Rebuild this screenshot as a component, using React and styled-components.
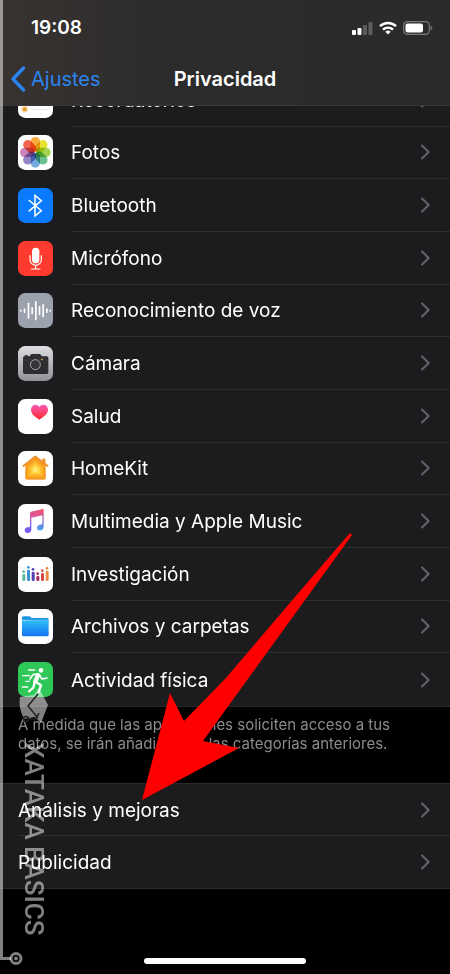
import React from "react";
import styled, { createGlobalStyle } from "styled-components";

const GlobalStyle = createGlobalStyle`
  *, *::before, *::after { box-sizing: border-box; }
  body {
    margin: 0;
    background: #000;
    color: #fff;
    font-family: Inter, "Liberation Sans", sans-serif;
  }
`;

const Screen = styled.div`
  position: relative;
  display: flex;
  flex-direction: column;
  min-height: 100vh;
  overflow: hidden;
  background: #000;
`;

const Header = styled.header`
  z-index: 1;
  display: flex;
  flex-direction: column;
  background: linear-gradient(90deg, #383331 0%, #2d2c2c 34%, #2a2a2a 100%);
  border-bottom: 1px solid #38383a;
`;

const StatusBar = styled.div`
  display: flex;
  align-items: center;
  justify-content: space-between;
  height: 56px;
  padding: 0 17px 0 31px;
`;

const Clock = styled.time`
  font-size: 19px;
  font-weight: 600;
  line-height: 24px;
`;

const StatusIcons = styled.div`
  display: flex;
  align-items: center;
  gap: 6px;
`;

const NavBar = styled.nav`
  display: grid;
  grid-template-columns: 1fr auto 1fr;
  align-items: center;
  height: 49px;
  padding: 0 10px 4px;
`;

const BackLink = styled.a`
  display: flex;
  align-items: center;
  gap: 6px;
  color: #2a84f0;
  font-size: 20px;
  line-height: 24px;
  text-decoration: none;
`;

const Title = styled.h1`
  margin: 0;
  font-size: 20px;
  font-weight: 600;
  line-height: 24px;
`;

const List = styled.ul`
  display: grid;
  grid-auto-rows: 1fr;
  min-height: ${(p) => (p.$scrolled ? "634px" : "106px")};
  margin: ${(p) => (p.$scrolled ? "-33px 0 0" : "30px 0 0")};
  padding: 0;
  list-style: none;
  background: #1c1c1e;
  border-top: 1px solid #2a2a2c;
  border-bottom: 1px solid #2a2a2c;
`;

const Row = styled.li`
  display: flex;
  padding-left: 18px;
`;

const RowLink = styled.a`
  flex: 1;
  display: flex;
  align-items: center;
  gap: 18px;
  color: #fff;
  text-decoration: none;
`;

const RowBody = styled.span`
  flex: 1;
  align-self: stretch;
  display: flex;
  align-items: center;
  justify-content: space-between;
  padding-right: 19px;
  border-bottom: ${(p) => (p.$last ? "0" : "1px solid #2e2e30")};
`;

const Label = styled.span`
  padding-top: 2px;
  font-size: 19px;
  line-height: 26px;
`;

const Note = styled.p`
  margin: 0;
  padding: 8px 18px 0;
  color: #8b8b90;
  font-size: 15px;
  line-height: 19px;
`;

const HomeArea = styled.footer`
  display: flex;
  justify-content: center;
  margin-top: auto;
  padding: 0 0 10px;
`;

const HomeIndicator = styled.div`
  width: 36%;
  height: 6px;
  border-radius: 3px;
  background: #fff;
`;

const Tile = styled.svg`
  flex: none;
  width: 35px;
  height: 35px;
`;

const PetalGroup = styled.g`
  isolation: isolate;
`;

const Petal = styled.rect`
  mix-blend-mode: multiply;
`;

const Overlay = styled.svg`
  position: absolute;
  z-index: 2;
  top: 0;
  left: 0;
  pointer-events: none;
`;

const Watermark = styled.div`
  position: absolute;
  z-index: 2;
  left: 18px;
  bottom: 38px;
  writing-mode: vertical-rl;
  color: rgba(255, 255, 255, 0.5);
  font-family: Roboto, sans-serif;
  font-size: 26px;
  font-weight: 500;
  line-height: 32px;
  white-space: nowrap;
  pointer-events: none;
`;

function Chevron() {
  return (
    <svg width="12" height="16" viewBox="0 0 12 16" fill="none" aria-hidden="true">
      <path d="M3 1.5 9.7 8 3 14.5" stroke="#646468" strokeWidth="2" strokeLinecap="round" strokeLinejoin="round" />
    </svg>
  );
}

function AppTile({ fill = "#fff", children }) {
  return (
    <Tile viewBox="0 0 105 105" aria-hidden="true">
      <rect width="105" height="105" rx="22" fill={fill} />
      {children}
    </Tile>
  );
}

function RemindersIcon() {
  return (
    <AppTile>
      <circle cx="20" cy="26" r="8" fill="#3b82f6" />
      <circle cx="20" cy="52" r="8" fill="#ef4444" />
      <circle cx="20" cy="79" r="10" fill="#fbdcae" />
      <circle cx="20" cy="79" r="6" fill="#f09a28" />
      <path d="M38 26h54M38 52h54M38 79h54" stroke="#d8d8dc" strokeWidth="2" />
    </AppTile>
  );
}

const petals = ["#fba32c", "#e6df1e", "#9fd041", "#5dbb84", "#6ba5dc", "#8c7dc2", "#c97bb5", "#f2573f"];

function PhotosIcon() {
  return (
    <AppTile>
      <PetalGroup>
        {petals.map((color, i) => (
          <Petal
            key={color}
            x="38"
            y="6"
            width="28"
            height="44"
            rx="14"
            fill={color}
            fillOpacity="0.92"
            transform={`rotate(${i * 45} 52 52)`}
          />
        ))}
      </PetalGroup>
    </AppTile>
  );
}

function BluetoothIcon() {
  return (
    <AppTile fill="#0a7aff">
      <path d="M32 36 70 68 51 84V22L70 38 32 70" fill="none" stroke="#fff" strokeWidth="4.5" />
    </AppTile>
  );
}

function MicIcon() {
  return (
    <AppTile fill="#ff3b30">
      <rect x="42" y="20" width="22" height="47" rx="11" fill="#fff" />
      <path d="M36 44v12a17 17 0 0 0 34 0V44M53 73v11M40 84h26" fill="none" stroke="#fff" strokeWidth="3.5" strokeLinecap="round" />
    </AppTile>
  );
}

const wave = [[8, 6], [19, 14], [31, 48], [42, 22], [53, 58], [64, 28], [75, 40], [86, 14], [96, 6]];

function VoiceIcon() {
  return (
    <AppTile fill="#9ca2ad">
      {wave.map(([x, h]) => (
        <rect key={x} x={x - 2} y={53 - h / 2} width="5" height={h} rx="2" fill="#fff" />
      ))}
    </AppTile>
  );
}

function CameraIcon() {
  return (
    <AppTile fill="url(#cameraTile)">
      <defs>
        <linearGradient id="cameraTile" x2="0" y2="1">
          <stop stopColor="#dedee1" />
          <stop offset="1" stopColor="#919196" />
        </linearGradient>
      </defs>
      <path d="M20 31v-3h10v3h5l5-7h26l6 7h14q5 0 5 5v43q0 5-5 5H20q-5 0-5-5V36q0-5 5-5Z" fill="#2e2e30" />
      <path d="M15 42h76" stroke="#47474a" strokeWidth="2" />
      <circle cx="52" cy="56" r="18" fill="#2e2e30" />
      <circle cx="52" cy="56" r="15" fill="#353537" stroke="#a9a9ad" strokeWidth="3" />
      <circle cx="72" cy="40" r="2.5" fill="#f5c542" />
    </AppTile>
  );
}

function HealthIcon() {
  return (
    <AppTile>
      <defs>
        <linearGradient id="heart" x2="0" y2="1">
          <stop stopColor="#fb5bb4" />
          <stop offset="1" stopColor="#fb2a2c" />
        </linearGradient>
      </defs>
      <path d="M64 62C50 53 39 44 39 32c0-9 6-15 13-15 5 0 9 2 12 7 3-5 8-7 13-7 7 0 13 6 13 15 0 12-12 21-26 30Z" fill="url(#heart)" />
    </AppTile>
  );
}

function HomeKitIcon() {
  return (
    <AppTile>
      <g strokeLinejoin="round">
        <path d="M74 36V24h7v16" fill="#f19a24" stroke="#e98a1c" strokeWidth="2" />
        <path d="M52 18 82 43v39q0 3-3 3H26q-3 0-3-3V43Z" fill="#f89d1e" stroke="#ee8c1b" strokeWidth="2" />
        <path d="M16 45 52 16l37 29" fill="none" stroke="#ee8f28" strokeWidth="5" strokeLinecap="round" />
        <path d="M52 30 74 48v27H31V48Z" fill="#fdb72a" stroke="#fdb72a" strokeWidth="3" />
        <path d="M52 40 65 51v16H40V51Z" fill="#ffd84a" stroke="#ffd03c" strokeWidth="4" />
        <path d="M52 48 58 54v8H46v-8Z" fill="#ffe87c" />
      </g>
    </AppTile>
  );
}

function MusicIcon() {
  return (
    <AppTile>
      <defs>
        <linearGradient id="note" gradientUnits="userSpaceOnUse" x1="60" y1="14" x2="45" y2="86">
          <stop stopColor="#f4536f" />
          <stop offset="0.35" stopColor="#d7569f" />
          <stop offset="0.7" stopColor="#7f62e6" />
          <stop offset="1" stopColor="#7658f0" />
        </linearGradient>
        <linearGradient id="noteRight" gradientUnits="userSpaceOnUse" x1="74" y1="20" x2="68" y2="78">
          <stop stopColor="#ee5577" />
          <stop offset="0.6" stopColor="#7d78dc" />
          <stop offset="1" stopColor="#3fa3ee" />
        </linearGradient>
      </defs>
      <path d="M36 27q0-3 3-4l35-8q3-1 3 2v16l-37 8v36c0 6-5 10-11 10s-9-3-9-8 4-8 9-9c5-1 7-1 7-5Z" fill="url(#note)" />
      <path d="M73 30h4v38c0 7-5 11-11 11s-9-3-9-8 4-8 9-9c5-1 7-1 7-5Z" fill="url(#noteRight)" />
    </AppTile>
  );
}

const people = [
  [17, 44, "#58b99b"],
  [31, 31, "#3d91d6"],
  [45, 37, "#5340b4"],
  [59, 50, "#a92a62"],
  [73, 41, "#d54a42"],
  [87, 34, "#e98a45"],
];

function ResearchIcon() {
  return (
    <AppTile>
      {people.map(([x, y, color]) => (
        <g key={x} fill={color}>
          <circle cx={x} cy={y} r="4" />
          <rect x={x - 4} y={y + 7} width="9" height={65 - y} rx="4" />
        </g>
      ))}
    </AppTile>
  );
}

function FilesIcon() {
  return (
    <AppTile>
      <defs>
        <linearGradient id="folder" x2="0" y2="1">
          <stop stopColor="#2cbcf8" />
          <stop offset="1" stopColor="#1672f3" />
        </linearGradient>
      </defs>
      <path d="M12 34v-8q0-4 4-4h17q3 0 5 2l3 3h46q5 0 5 5v6Z" fill="#1e98e3" />
      <path d="M12 36h80v41q0 5-5 5H17q-5 0-5-5Z" fill="url(#folder)" />
      <path d="M14 34h76" stroke="#7ed6fb" strokeWidth="2" />
    </AppTile>
  );
}

function FitnessIcon() {
  return (
    <AppTile fill="#30c759">
      <circle cx="69" cy="25" r="7" fill="#fff" />
      <g fill="none" stroke="#fff" strokeLinecap="round" strokeLinejoin="round">
        <path d="M60 40 52 58" strokeWidth="13" />
        <path d="M59 36 45 38 36 51M64 38l8 13 15-3" strokeWidth="5" />
        <path d="M55 61 69 70 62 90M50 61 46 77 33 88" strokeWidth="7" />
        <path d="M32 24h18M14 41h21M24 58h10M13 75h16" strokeWidth="4" />
      </g>
    </AppTile>
  );
}

const permissions = [
  ["Recordatorios", RemindersIcon],
  ["Fotos", PhotosIcon],
  ["Bluetooth", BluetoothIcon],
  ["Micrófono", MicIcon],
  ["Reconocimiento de voz", VoiceIcon],
  ["Cámara", CameraIcon],
  ["Salud", HealthIcon],
  ["HomeKit", HomeKitIcon],
  ["Multimedia y Apple Music", MusicIcon],
  ["Investigación", ResearchIcon],
  ["Archivos y carpetas", FilesIcon],
  ["Actividad física", FitnessIcon],
];

const general = [["Análisis y mejoras"], ["Publicidad"]];

function SettingsList({ items, scrolled }) {
  return (
    <List $scrolled={scrolled}>
      {items.map(([label, Icon], i) => (
        <Row key={label}>
          <RowLink href="#">
            {Icon && <Icon />}
            <RowBody $last={i === items.length - 1}>
              <Label>{label}</Label>
              <Chevron />
            </RowBody>
          </RowLink>
        </Row>
      ))}
    </List>
  );
}

export default function App() {
  return (
    <Screen>
      <GlobalStyle />
      <Header>
        <StatusBar>
          <Clock>19:08</Clock>
          <StatusIcons>
            <svg width="21" height="14" viewBox="0 0 21 14" aria-hidden="true">
              <rect x="0" y="9" width="4" height="5" rx="1" fill="#fff" />
              <rect x="5.5" y="7" width="4" height="7" rx="1" fill="#fff" />
              <rect x="11" y="4" width="4" height="10" rx="1" fill="#5c5c5c" />
              <rect x="16.5" y="1" width="4" height="13" rx="1" fill="#5c5c5c" />
            </svg>
            <svg width="18" height="14" viewBox="0 0 18 14" fill="none" stroke="#fff" strokeWidth="2.4" aria-hidden="true">
              <path d="M1 5.2a11.5 11.5 0 0 1 16 0M4 8.6a7.2 7.2 0 0 1 10 0" />
              <path d="M9 13.4 6.3 10.8a4 4 0 0 1 5.4 0Z" fill="#fff" stroke="none" />
            </svg>
            <svg width="30" height="14" viewBox="0 0 30 14" aria-hidden="true">
              <rect x="0.7" y="0.7" width="25.6" height="12.6" rx="3.6" fill="none" stroke="#7c7c7c" strokeWidth="1.2" />
              <rect x="2.5" y="2.5" width="17.5" height="9" rx="2" fill="#fff" />
              <path d="M27.6 4.8q1.8.7 1.8 2.2t-1.8 2.2Z" fill="#7c7c7c" />
            </svg>
          </StatusIcons>
        </StatusBar>
        <NavBar>
          <BackLink href="#">
            <svg width="15" height="26" viewBox="0 0 15 26" fill="none" aria-hidden="true">
              <path d="M13.5 2 3 13l10.5 11" stroke="#2a84f0" strokeWidth="3.4" strokeLinecap="round" strokeLinejoin="round" />
            </svg>
            Ajustes
          </BackLink>
          <Title>Privacidad</Title>
        </NavBar>
      </Header>
      <main>
        <SettingsList items={permissions} scrolled />
        <Note>
          A medida que las aplicaciones soliciten acceso a tus datos, se irán añadiendo a las categorías anteriores.
        </Note>
        <SettingsList items={general} />
      </main>
      <HomeArea>
        <HomeIndicator />
      </HomeArea>
      <Watermark>XATAKA BASICS</Watermark>
      <Overlay width="450" height="974" viewBox="0 0 450 974" aria-hidden="true">
        <g stroke="#fff" strokeOpacity="0.5" fill="none" strokeWidth="3">
          <path d="M1.5 0V958.5H11" />
          <circle cx="16" cy="958.5" r="5" />
        </g>
        <circle cx="16" cy="958.5" r="2" fill="#fff" fillOpacity="0.5" />
        <path d="M39 688 48 705 41 723 35 717 24 719Q18 707 20 697L34 695Z" fill="#fff" fillOpacity="0.5" />
        <path d="M38 694 28 706 38 718M29 719h7l3-6" fill="none" stroke="#222" strokeWidth="1.5" />
        <circle cx="26" cy="719" r="2.5" fill="none" stroke="#222" strokeWidth="1.5" />
        <path d="M142 800 170 693 184 721 225 679 295 597 350 533 352 535 203 741 239 748Z" fill="#f00" />
      </Overlay>
    </Screen>
  );
}
